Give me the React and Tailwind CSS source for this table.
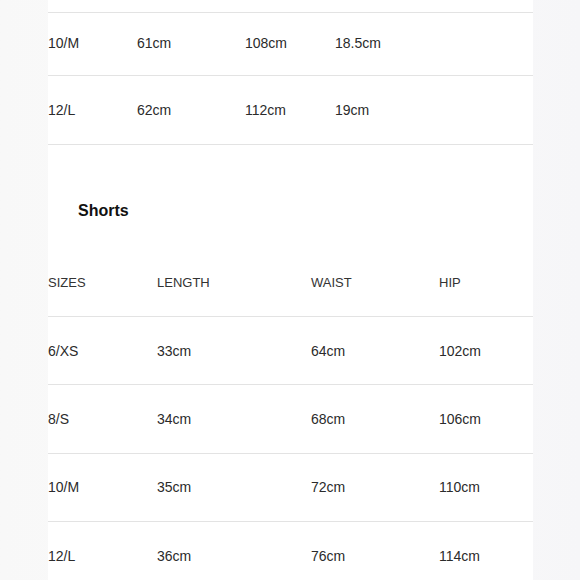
import React from 'react';

const topRows = [
  ['10/M', '61cm', '108cm', '18.5cm'],
  ['12/L', '62cm', '112cm', '19cm'],
];

const shortsRows = [
  ['6/XS', '33cm', '64cm', '102cm'],
  ['8/S', '34cm', '68cm', '106cm'],
  ['10/M', '35cm', '72cm', '110cm'],
  ['12/L', '36cm', '76cm', '114cm'],
];

const Cells = ({ cells, widths }) => (
  <>
    {cells.map((c, i) => (
      <span key={i} className={i < widths.length ? widths[i] : ''}>
        {c}
      </span>
    ))}
  </>
);

const App = () => {
  const topW = ['w-[89px]', 'w-[108px]', 'w-[90px]'];
  const shortW = ['w-[109px]', 'w-[154px]', 'w-[128px]'];

  return (
    <div
      className="h-[580px] w-[580px] overflow-hidden flex bg-gradient-to-r from-[#f8f8f8] via-[#fbfbfb] to-[#f6f6f8] text-[#2b2b2b]"
      style={{ fontFamily: '"Liberation Sans", Arial, sans-serif' }}
    >
      <div className="ml-[48px] w-[485px] bg-white flex flex-col">
        <div className="h-[13px] shrink-0 border-b border-[#e3e3e3]" />
        {topRows.map((r, i) => (
          <div
            key={i}
            className={
              'flex items-center shrink-0 border-b border-[#e3e3e3] text-[14px] ' +
              (i === 0 ? 'h-[63px] pb-[2px]' : 'h-[69px] pt-[1px]')
            }
          >
            <Cells cells={r} widths={topW} />
          </div>
        ))}

        <div className="h-[103px] shrink-0 pt-[56px] pl-[30px]">
          <h2 className="text-[16px] leading-[20px] font-bold text-[#111]">Shorts</h2>
        </div>

        <div className="h-[69px] shrink-0 flex items-center pt-[1px] border-b border-[#e3e3e3] text-[13px] text-[#333]">
          <Cells cells={['SIZES', 'LENGTH', 'WAIST', 'HIP']} widths={shortW} />
        </div>
        {shortsRows.map((r, i) => (
          <div
            key={i}
            className="h-[68.4px] shrink-0 flex items-center pt-[1px] border-b border-[#e3e3e3] text-[14px]"
          >
            <Cells cells={r} widths={shortW} />
          </div>
        ))}
      </div>
    </div>
  );
};

export default App;
